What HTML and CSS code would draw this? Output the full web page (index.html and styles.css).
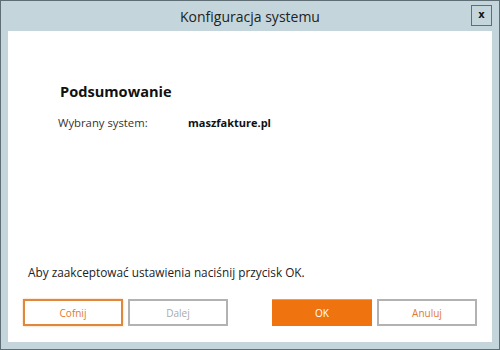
FILE: index.html
```
<!DOCTYPE html>
<html lang="pl">
<head>
    <meta charset="UTF-8">
    <title>Konfiguracja systemu</title>
    <link rel="stylesheet" href="styles.css">
</head>
<body>
    <div class="window">
        <!-- Pasek tytułu -->
        <div class="titlebar">
            <span class="title">Konfiguracja systemu</span>
            <button class="close">x</button>
        </div>

        <!-- Zawartość okna -->
        <div class="content">
            <h1>Podsumowanie</h1>
            <div class="row">
                <span class="label">Wybrany system:</span>
                <span class="value">maszfakture.pl</span>
            </div>

            <p class="info">Aby zaakceptować ustawienia naciśnij przycisk OK.</p>

            <div class="buttons">
                <button class="btn focused">Cofnij</button>
                <button class="btn disabled">Dalej</button>
                <span class="spacer"></span>
                <button class="btn primary">OK</button>
                <button class="btn">Anuluj</button>
            </div>
        </div>
    </div>
</body>
</html>
```

FILE: styles.css
```
body {
    margin: 0;
    font-family: "Open Sans", "Noto Sans", sans-serif;
    background: #fff;
}

.window {
    width: 500px;
    height: 350px;
    box-sizing: border-box;
    border: 1px solid #5f6e75;
    background-color: #c4d5dc;
    padding: 0 7px 7px 7px;
    display: flex;
    flex-direction: column;
}

/* Pasek tytułu */
.titlebar {
    height: 30px;
    position: relative;
    display: flex;
    justify-content: center;
    align-items: center;
}

.title {
    font-size: 14px;
    color: #222;
}

.close {
    position: absolute;
    right: 0;
    top: 4px;
    width: 21px;
    height: 21px;
    box-sizing: border-box;
    border: 1px solid #5f6e75;
    background: transparent;
    font-family: "DejaVu Sans", sans-serif;
    font-size: 10px;
    font-weight: bold;
    padding: 0 0 2px 0;
    color: #111;
}

/* Zawartość */
.content {
    flex: 1;
    background: #fff;
    display: flex;
    flex-direction: column;
    padding: 0 15px 16px 15px;
}

h1 {
    font-size: 14.6px;
    font-weight: bold;
    color: #111;
    margin: 50px 0 0 37px;
}

.row {
    display: flex;
    margin: 14px 0 0 35px;
    font-size: 11.3px;
    color: #333;
}

.label {
    width: 130px;
}

.value {
    font-weight: bold;
    font-size: 11px;
    color: #111;
}

.info {
    margin: auto 0 0 5px;
    font-size: 11.8px;
    color: #222;
}

.buttons {
    display: flex;
    gap: 5px;
    margin-top: 19px;
}

.spacer {
    width: 34px;
}

.btn {
    width: 100px;
    height: 27px;
    box-sizing: border-box;
    border: 2px solid #b2b2b2;
    background: #fff;
    font-family: "Open Sans", "Noto Sans", sans-serif;
    font-size: 10px;
    color: #e07a30;
}

.btn.focused {
    border-color: #e0873e;
    box-shadow: 0 0 2px #f5c58f;
}

.btn.disabled {
    color: #aaa;
}

.btn.primary {
    border: none;
    border-top: 1px solid #f59a52;
    background: #ef7410;
    color: #fff;
}
```
